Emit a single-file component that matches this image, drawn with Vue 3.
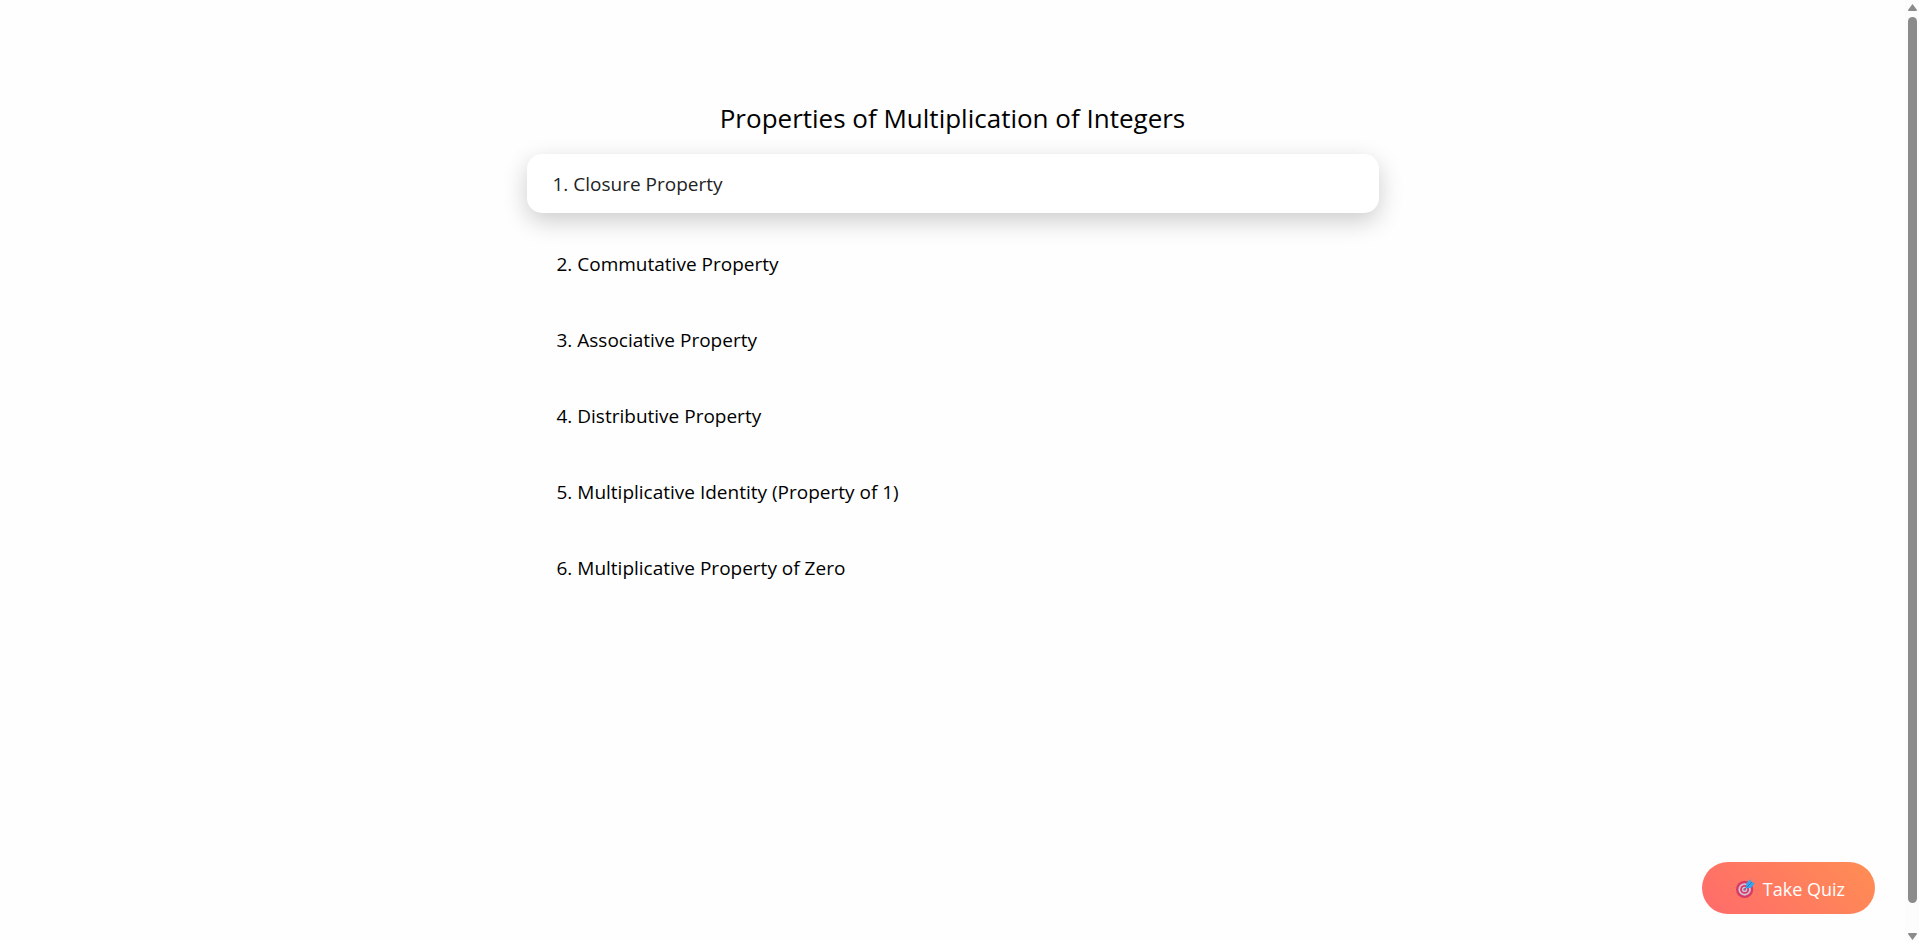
<script setup>
import { ref } from 'vue'

const properties = [
  'Closure Property',
  'Commutative Property',
  'Associative Property',
  'Distributive Property',
  'Multiplicative Identity (Property of 1)',
  'Multiplicative Property of Zero',
]
const active = ref(0)
</script>

<template>
  <div class="page">
    <main class="content">
      <h1 class="title">Properties of Multiplication of Integers</h1>
      <div class="list">
        <button
          v-for="(name, i) in properties"
          :key="name"
          type="button"
          class="item"
          :class="{ active: i === active }"
          @click="active = i"
        >{{ i + 1 }}. {{ name }}</button>
      </div>
    </main>

    <button type="button" class="quiz">
      <svg class="target" viewBox="0 0 32 32" aria-hidden="true">
        <circle cx="14.5" cy="17.5" r="14.5" fill="#d63a66" />
        <circle cx="14.5" cy="17.5" r="10.5" fill="#d5bfd6" />
        <circle cx="14.5" cy="17.5" r="7.5" fill="#d63a66" />
        <circle cx="14.5" cy="17.5" r="4.5" fill="#d5bfd6" />
        <circle cx="14.5" cy="17.5" r="2" fill="#b04a80" />
        <path d="M14.5 17.5 L24 8" stroke="#5470b5" stroke-width="2" />
        <path d="M17 8 L24 0 L26 5 L32 7 L25 15 L17 15 Z" fill="#38a5ed" />
        <path d="M18 14 L27 5" stroke="#2474c6" stroke-width="1.5" />
      </svg>
      <span>Take Quiz</span>
    </button>

    <div class="scrollbar" aria-hidden="true">
      <svg class="arrow" viewBox="0 0 9 7"><path d="M4.5 0 L9 6 Q9 7 8 7 H1 Q0 7 0 6 Z" fill="#8b8b8b" /></svg>
      <div class="thumb"></div>
      <svg class="arrow" viewBox="0 0 9 7"><path d="M4.5 7 L9 1 Q9 0 8 0 H1 Q0 0 0 1 Z" fill="#8b8b8b" /></svg>
    </div>
  </div>
</template>

<style>
body {
  margin: 0;
  background: #fefefe;
}
</style>

<style scoped>
.page {
  min-height: 100vh;
  box-sizing: border-box;
  padding: 100px 14px 40px 0;
  font-family: "Segoe UI", "Open Sans", "Noto Sans", sans-serif;
  color: #000;
}
.content {
  max-width: 852px;
  margin: 0 auto;
}
.title {
  margin: 0 0 18px;
  font-size: 26px;
  line-height: 36px;
  font-weight: 400;
  text-align: center;
}
.list {
  display: flex;
  flex-direction: column;
  gap: 17px;
}
.item {
  min-height: 59px;
  padding: 1px 30px 0;
  border: 0;
  border-radius: 15px;
  background: transparent;
  color: inherit;
  font: inherit;
  font-size: 19px;
  line-height: 28px;
  text-align: left;
  cursor: pointer;
}
.item.active {
  margin-bottom: 4px;
  padding: 1px 26px 0;
  background: #fff;
  color: #222;
  box-shadow: 0 8px 25px rgba(0, 0, 0, 0.2);
}
.quiz {
  position: fixed;
  right: 44px;
  bottom: 27px;
  display: flex;
  align-items: center;
  gap: 8px;
  height: 52px;
  padding: 1px 30px 0 34px;
  border: 0;
  border-radius: 26px;
  background: linear-gradient(45deg, #ff6b6b, #ff8e53);
  color: #fff;
  font: inherit;
  font-size: 18px;
  line-height: 26px;
  cursor: pointer;
}
.target {
  width: 19px;
  height: 19px;
}
.scrollbar {
  position: fixed;
  top: 0;
  right: 0;
  bottom: 0;
  box-sizing: border-box;
  width: 14px;
  padding: 4px 2px 1px 3px;
  display: flex;
  flex-direction: column;
  background: #fcfcfc;
}
.arrow {
  flex: none;
  width: 9px;
  height: 7px;
}
.thumb {
  flex: 1;
  margin: 6px 0 30px;
  border-radius: 5px;
  background: #8b8b8b;
}
</style>
